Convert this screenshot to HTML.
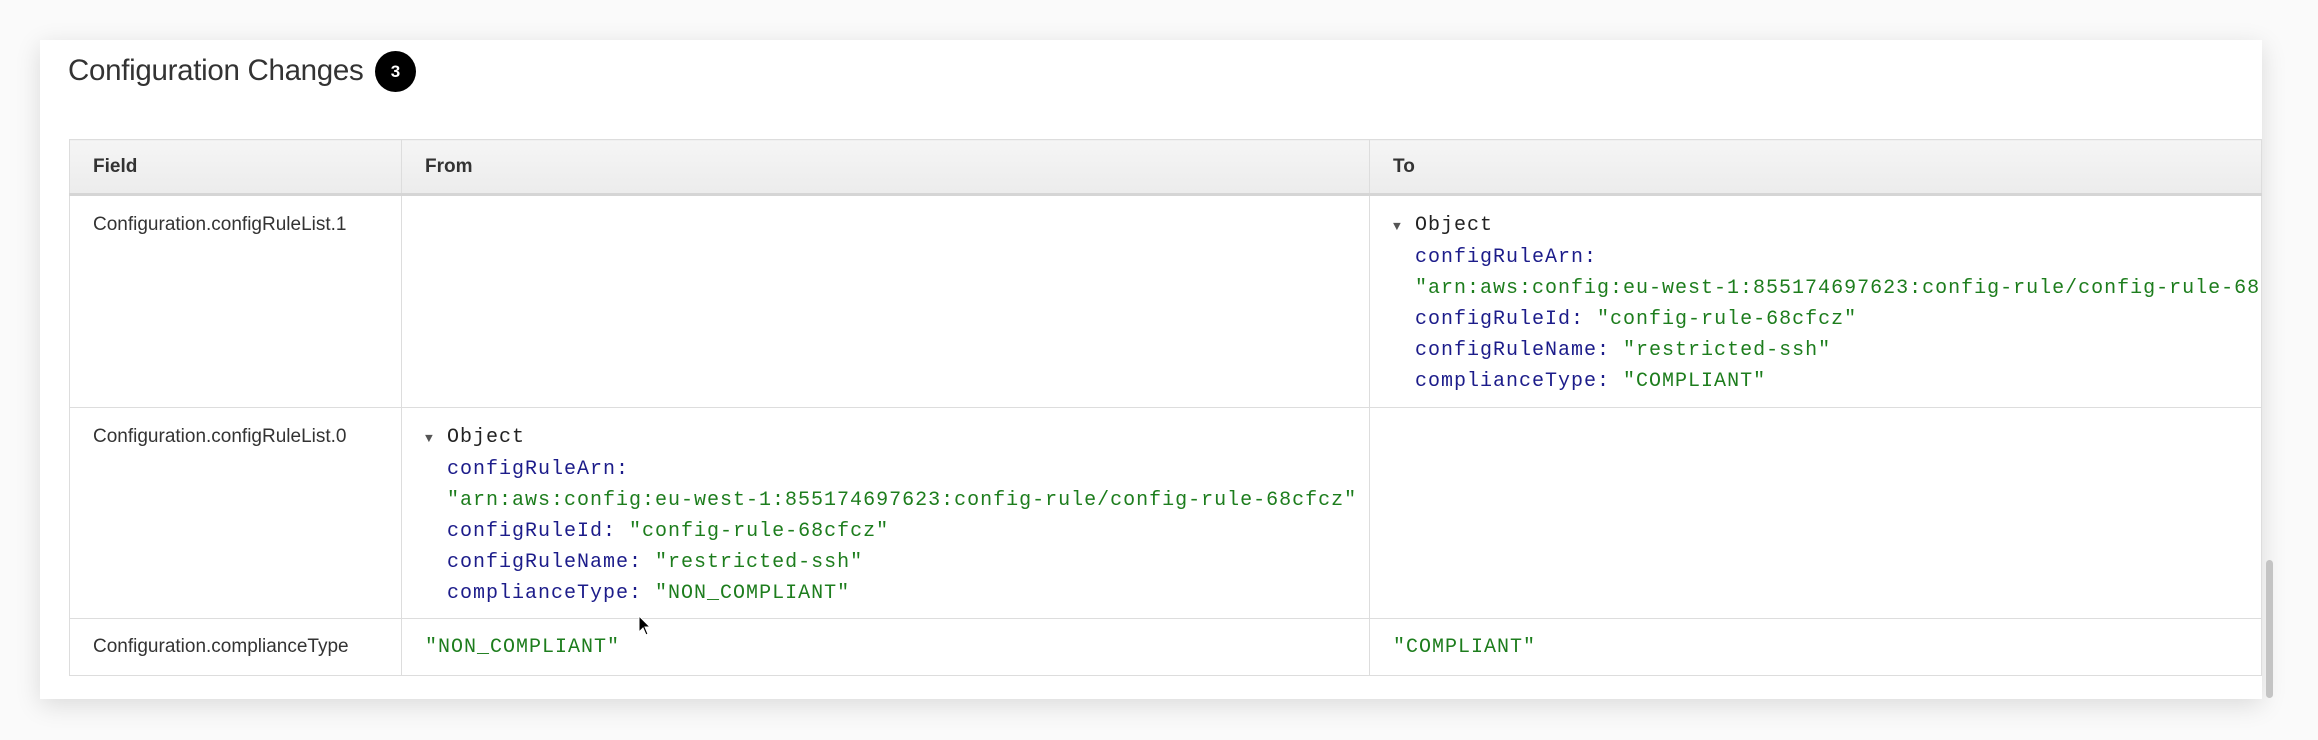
<!DOCTYPE html>
<html><head><meta charset="utf-8"><style>
html,body{margin:0;padding:0;width:2318px;height:740px;background:#fafafa;overflow:hidden;font-family:"Liberation Sans",sans-serif;}
.card{position:absolute;left:40px;top:40px;width:2222px;height:659px;background:#fff;box-shadow:0 6px 24px rgba(0,0,0,0.13);}
.title{position:absolute;left:68px;top:54px;font-size:29.5px;color:#333;letter-spacing:-0.3px;}
.badge{position:absolute;left:375px;top:51px;width:41px;height:41px;border-radius:50%;background:#000;color:#fff;font-size:17px;font-weight:bold;text-align:center;line-height:41px;}
table{position:absolute;left:69px;top:139px;width:2193px;border-collapse:collapse;table-layout:fixed;}
th{background:linear-gradient(#f5f5f5,#ececec);height:52px;text-align:left;font-size:19px;color:#333;font-weight:bold;padding:1px 0 0 23px;border:1px solid #ddd;border-bottom:3px solid #d5d5d5;}
td{border:1px solid #ddd;vertical-align:top;padding:0 0 0 23px;font-size:19px;color:#333;}
.m{font-family:"Liberation Mono",monospace;font-size:20px;letter-spacing:1.0px;line-height:31px;}
.k{color:#1c1c8a;}.s{color:#1d7d1d;}
.obj{color:#222;}
.tri{font-size:13px;color:#555;display:inline-block;width:22px;}
.ind{padding-left:22px;white-space:nowrap;}
.scroll{position:absolute;left:2266px;top:560px;width:7px;height:138px;border-radius:4px;background:#c4c4c4;}
</style></head><body>
<div class="card"></div>
<div class="title">Configuration Changes</div>
<div class="badge">3</div>
<table>
<colgroup><col style="width:332px"><col style="width:968px"><col></colgroup>
<tr><th>Field</th><th>From</th><th>To</th></tr>
<tr style="height:213px"><td style="padding-top:18px">Configuration.configRuleList.1</td><td></td>
<td style="padding-top:14px;overflow:hidden"><div class="m"><span class="tri">▼</span><span class="obj">Object</span>
<div class="ind"><span class="k">configRuleArn:</span></div>
<div class="ind"><span class="s">"arn:aws:config:eu-west-1:855174697623:config-rule/config-rule-68cfcz"</span></div>
<div class="ind"><span class="k">configRuleId:</span> <span class="s">"config-rule-68cfcz"</span></div>
<div class="ind"><span class="k">configRuleName:</span> <span class="s">"restricted-ssh"</span></div>
<div class="ind"><span class="k">complianceType:</span> <span class="s">"COMPLIANT"</span></div></div></td></tr>
<tr style="height:211px"><td style="padding-top:18px">Configuration.configRuleList.0</td>
<td style="padding-top:14px"><div class="m"><span class="tri">▼</span><span class="obj">Object</span>
<div class="ind"><span class="k">configRuleArn:</span></div>
<div class="ind"><span class="s">"arn:aws:config:eu-west-1:855174697623:config-rule/config-rule-68cfcz"</span></div>
<div class="ind"><span class="k">configRuleId:</span> <span class="s">"config-rule-68cfcz"</span></div>
<div class="ind"><span class="k">configRuleName:</span> <span class="s">"restricted-ssh"</span></div>
<div class="ind"><span class="k">complianceType:</span> <span class="s">"NON_COMPLIANT"</span></div></div></td><td></td></tr>
<tr style="height:57px"><td style="vertical-align:middle">Configuration.complianceType</td>
<td style="vertical-align:middle"><span class="m s">"NON_COMPLIANT"</span></td>
<td style="vertical-align:middle"><span class="m s">"COMPLIANT"</span></td></tr>
</table>
<div class="scroll"></div>
<svg style="position:absolute;left:638px;top:615px" width="14" height="22" viewBox="0 0 14 22"><path d="M1 1 L1 17 L5 13 L8 20 L10 19 L7 12 L12 12 Z" fill="#000" stroke="#fff" stroke-width="1"/></svg>
</body></html>
